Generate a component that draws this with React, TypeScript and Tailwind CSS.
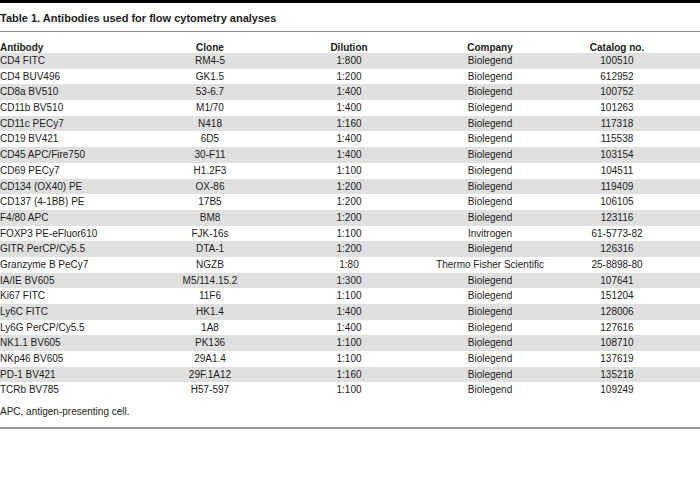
const rows: [string, string, string, string, string][] = [
  ['CD4 FITC', 'RM4-5', '1:800', 'Biolegend', '100510'],
  ['CD4 BUV496', 'GK1.5', '1:200', 'Biolegend', '612952'],
  ['CD8a BV510', '53-6.7', '1:400', 'Biolegend', '100752'],
  ['CD11b BV510', 'M1/70', '1:400', 'Biolegend', '101263'],
  ['CD11c PECy7', 'N418', '1:160', 'Biolegend', '117318'],
  ['CD19 BV421', '6D5', '1:400', 'Biolegend', '115538'],
  ['CD45 APC/Fire750', '30-F11', '1:400', 'Biolegend', '103154'],
  ['CD69 PECy7', 'H1.2F3', '1:100', 'Biolegend', '104511'],
  ['CD134 (OX40) PE', 'OX-86', '1:200', 'Biolegend', '119409'],
  ['CD137 (4-1BB) PE', '17B5', '1:200', 'Biolegend', '106105'],
  ['F4/80 APC', 'BM8', '1:200', 'Biolegend', '123116'],
  ['FOXP3 PE-eFluor610', 'FJK-16s', '1:100', 'Invitrogen', '61-5773-82'],
  ['GITR PerCP/Cy5.5', 'DTA-1', '1:200', 'Biolegend', '126316'],
  ['Granzyme B PeCy7', 'NGZB', '1:80', 'Thermo Fisher Scientific', '25-8898-80'],
  ['IA/IE BV605', 'M5/114.15.2', '1:300', 'Biolegend', '107641'],
  ['Ki67 FITC', '11F6', '1:100', 'Biolegend', '151204'],
  ['Ly6C FITC', 'HK1.4', '1:400', 'Biolegend', '128006'],
  ['Ly6G PerCP/Cy5.5', '1A8', '1:400', 'Biolegend', '127616'],
  ['NK1.1 BV605', 'PK136', '1:100', 'Biolegend', '108710'],
  ['NKp46 BV605', '29A1.4', '1:100', 'Biolegend', '137619'],
  ['PD-1 BV421', '29F.1A12', '1:160', 'Biolegend', '135218'],
  ['TCRb BV785', 'H57-597', '1:100', 'Biolegend', '109249'],
];

const cols = 'grid grid-cols-[140px_140px_138px_144px_110px]';

export default function App() {
  return (
    <div className="w-[700px] h-[483px] bg-white text-[#1c1c1c] font-['Liberation_Sans',Arial,sans-serif]">
      <div className="h-[3px] bg-black" />
      <div className="h-[29px] flex items-center pt-[3px] border-b border-[#8c8c8c]">
        <h1 className="text-[11px] font-bold leading-none">Table 1. Antibodies used for flow cytometry analyses</h1>
      </div>

      <div className={`${cols} h-[21px] items-end text-[10px] font-bold leading-[11px]`}>
        <div>Antibody</div>
        <div className="text-center">Clone</div>
        <div className="text-center">Dilution</div>
        <div className="text-center">Company</div>
        <div className="text-center">Catalog no.</div>
      </div>

      <div className="text-[10px]">
        {rows.map((row, i) => (
          <div
            key={row[0]}
            className={`${cols} h-[15.7px] leading-[15.7px] ${i % 2 === 0 ? 'bg-[#e0e0e0]' : ''}`}
          >
            <div>{row[0]}</div>
            <div className="text-center">{row[1]}</div>
            <div className="text-center">{row[2]}</div>
            <div className="text-center">{row[3]}</div>
            <div className="text-center">{row[4]}</div>
          </div>
        ))}
      </div>

      <div className="pt-[7px] pb-[9px] border-b-2 border-[#9a9a9a]">
        <p className="text-[10px] leading-[13px]">APC, antigen-presenting cell.</p>
      </div>
    </div>
  );
}
